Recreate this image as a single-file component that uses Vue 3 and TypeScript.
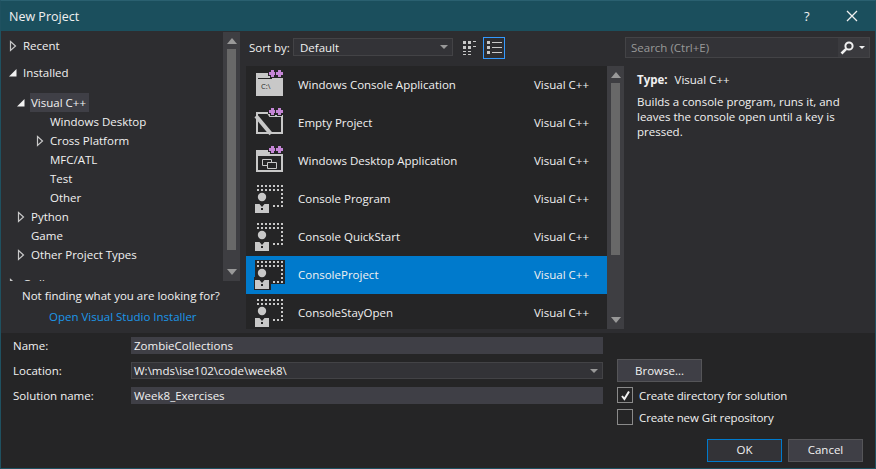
<template>
  <div class="dialog">
    <header class="titlebar">
      <span class="title">New Project</span>
      <span class="help">?</span>
      <svg class="close" width="14" height="14" viewBox="0 0 14 14">
        <path d="M2 2L12 12M12 2L2 12" stroke="#f1f1f1" stroke-width="1.3" fill="none" />
      </svg>
    </header>

    <main class="top">
      <aside class="left">
        <div class="tree-wrap">
          <ul class="tree">
            <li
              v-for="node in tree"
              :key="node.label"
              class="node"
              :class="[`lvl-${node.level}`, { spaced: node.spaced }]"
            >
              <svg class="arrow" width="10" height="12" viewBox="0 0 10 12">
                <path v-if="node.arrow === 'closed'" d="M2.5 1.5L7.5 6L2.5 10.5Z" fill="none" stroke="#c8c8c8" stroke-width="1.2" />
                <path v-else-if="node.arrow === 'open'" d="M8.5 2V9.5H1Z" fill="#f1f1f1" />
              </svg>
              <span class="node-text" :class="{ current: node.current }">{{ node.label }}</span>
            </li>
          </ul>
          <div class="scrollbar">
            <svg width="10" height="6" viewBox="0 0 10 6"><path d="M5 0L10 6H0Z" fill="#999" /></svg>
            <div class="tree-thumb"></div>
            <svg width="10" height="6" viewBox="0 0 10 6"><path d="M5 6L10 0H0Z" fill="#999" /></svg>
          </div>
        </div>
        <p class="hint">Not finding what you are looking for?</p>
        <a class="link">Open Visual Studio Installer</a>
      </aside>

      <section class="middle">
        <div class="sort-row">
          <label class="sort-label">Sort by:</label>
          <div class="sort-select">
            <span>Default</span>
            <i class="caret"></i>
          </div>
          <button class="view-btn">
            <svg width="14" height="14" viewBox="0 0 14 14" fill="#c8c8c8">
              <rect x="0" y="0" width="3" height="3" /><rect x="5" y="0" width="3" height="3" /><rect x="10" y="0" width="3" height="1" />
              <rect x="0" y="5" width="3" height="3" /><rect x="5" y="5" width="3" height="3" /><rect x="10" y="5" width="3" height="1" />
              <rect x="0" y="10" width="3" height="1" /><rect x="5" y="10" width="3" height="1" />
              <rect x="0" y="13" width="3" height="1" /><rect x="5" y="13" width="3" height="1" />
            </svg>
          </button>
          <button class="view-btn active">
            <svg width="15" height="14" viewBox="0 0 15 14" fill="#c8c8c8">
              <rect x="0" y="0" width="3" height="3" /><rect x="5" y="1" width="10" height="1" />
              <rect x="0" y="5" width="3" height="3" /><rect x="5" y="6" width="10" height="1" />
              <rect x="0" y="10" width="3" height="3" /><rect x="5" y="11" width="10" height="1" />
            </svg>
          </button>
        </div>

        <div class="list-wrap">
          <ul class="list">
            <li v-for="t in templates" :key="t.name" class="row" :class="{ selected: t.selected }">
              <svg class="tpl-icon" width="31" height="30" viewBox="0 0 31 30">
                <template v-if="t.icon === 'console'">
                  <path class="halo" d="M1 0H31V24H17V30H0V17H1Z" />
                  <rect v-for="d in consoleDots" :key="d.join()" :x="d[0]" :y="d[1]" width="2" height="2" fill="#c8c8c8" />
                  <circle cx="8" cy="13" r="4.2" fill="#c8c8c8" />
                  <path d="M1 20H5.5L8 23L10.5 20H15V29H1Z" fill="#c8c8c8" />
                  <rect x="7" y="24" width="2" height="2" class="tie" />
                </template>
                <template v-else>
                  <template v-if="t.icon === 'app'">
                    <path d="M2 3H16L18 8H29V26H2Z" fill="#c8c8c8" />
                    <path d="M4 8H18V9H4Z" fill="#252526" />
                    <text x="7" y="19" class="cmd">C:\</text>
                  </template>
                  <template v-if="t.icon === 'empty'">
                    <path d="M3 5H14L16 8H28V25H3Z" fill="none" stroke="#c8c8c8" stroke-width="2" />
                    <path d="M2 8L17 26" stroke="#c8c8c8" stroke-width="4" fill="none" />
                  </template>
                  <template v-if="t.icon === 'desktop'">
                    <path d="M3 5H15L17 9H28V25H3Z" fill="none" stroke="#c8c8c8" stroke-width="2" />
                    <path d="M2 4H15V9H2Z" fill="#c8c8c8" />
                    <path d="M2 8H29V10H2Z" fill="#c8c8c8" />
                    <path d="M8.5 13.5H17.5V19.5H8.5Z" fill="none" stroke="#c8c8c8" />
                    <path d="M13.5 16.5H22.5V22.5H13.5Z" fill="#252526" stroke="#c8c8c8" />
                  </template>
                  <path class="plus" d="M18 0H21V2H23V5H21V7H18V5H16V2H18Z" transform="translate(-1 0)" />
                  <path class="plus" d="M18 0H21V2H23V5H21V7H18V5H16V2H18Z" transform="translate(6 0)" />
                </template>
              </svg>
              <span class="tpl-name">{{ t.name }}</span>
              <span class="tpl-lang">Visual C++</span>
            </li>
          </ul>
          <div class="scrollbar">
            <svg width="10" height="6" viewBox="0 0 10 6"><path d="M5 0L10 6H0Z" fill="#999" /></svg>
            <div class="list-thumb"></div>
            <svg width="10" height="6" viewBox="0 0 10 6"><path d="M5 6L10 0H0Z" fill="#999" /></svg>
          </div>
        </div>
      </section>

      <aside class="right">
        <div class="search">
          <span class="search-text">Search (Ctrl+E)</span>
          <span class="search-btn">
            <svg class="lens" width="14" height="14" viewBox="0 0 14 14">
              <circle cx="9" cy="5" r="3.6" fill="none" stroke="#f1f1f1" stroke-width="2" />
              <path d="M6.2 7.8L1.5 12.5" stroke="#f1f1f1" stroke-width="2.6" />
            </svg>
            <i class="caret light"></i>
          </span>
        </div>
        <p class="type"><b>Type:</b><span>Visual C++</span></p>
        <p class="desc">Builds a console program, runs it, and leaves the console open until a key is pressed.</p>
      </aside>
    </main>

    <footer class="bottom">
      <div class="fields">
        <label>Name:</label>
        <div class="field">ZombieCollections</div>
        <label>Location:</label>
        <div class="field combo">W:\mds\ise102\code\week8\<i class="caret"></i></div>
        <label>Solution name:</label>
        <div class="field">Week8_Exercises</div>
      </div>
      <div class="options">
        <button class="btn browse">Browse...</button>
        <div class="check">
          <span class="box">
            <svg width="13" height="13" viewBox="0 0 13 13"><path d="M3 7L5.4 10L10 2.5" fill="none" stroke="#f1f1f1" stroke-width="2" /></svg>
          </span>
          Create directory for solution
        </div>
        <div class="check"><span class="box"></span>Create new Git repository</div>
      </div>
      <div class="actions">
        <button class="btn primary">OK</button>
        <button class="btn">Cancel</button>
      </div>
    </footer>
  </div>
</template>

<script setup lang="ts">
interface TreeNode {
  label: string
  level: number
  arrow?: 'closed' | 'open'
  spaced?: boolean
  current?: boolean
}

interface ProjectTemplate {
  name: string
  icon: 'app' | 'empty' | 'desktop' | 'console'
  selected?: boolean
}

const tree: TreeNode[] = [
  { label: 'Recent', level: 0, arrow: 'closed' },
  { label: 'Installed', level: 0, arrow: 'open', spaced: true },
  { label: 'Visual C++', level: 1, arrow: 'open', spaced: true, current: true },
  { label: 'Windows Desktop', level: 2 },
  { label: 'Cross Platform', level: 2, arrow: 'closed' },
  { label: 'MFC/ATL', level: 2 },
  { label: 'Test', level: 2 },
  { label: 'Other', level: 2 },
  { label: 'Python', level: 1, arrow: 'closed' },
  { label: 'Game', level: 1 },
  { label: 'Other Project Types', level: 1, arrow: 'closed' },
  { label: 'Online', level: 0, arrow: 'closed', spaced: true },
]

const templates: ProjectTemplate[] = [
  { name: 'Windows Console Application', icon: 'app' },
  { name: 'Empty Project', icon: 'empty' },
  { name: 'Windows Desktop Application', icon: 'desktop' },
  { name: 'Console Program', icon: 'console' },
  { name: 'Console QuickStart', icon: 'console' },
  { name: 'ConsoleProject', icon: 'console', selected: true },
  { name: 'ConsoleStayOpen', icon: 'console' },
]

// dotted window frame of the console template icon
const consoleDots: number[][] = [
  ...[3, 7, 11, 15, 19, 23, 27].map((x) => [x, 1]),
  ...[3, 7, 11, 15, 19, 23, 27].map((x) => [x, 5]),
  [27, 9], [27, 13], [27, 17],
  [19, 21], [23, 21], [27, 21],
]
</script>

<style>
html, body { margin: 0; background: #252526; }
</style>

<style scoped>
* { box-sizing: border-box; }

.dialog {
  width: 876px;
  height: 469px;
  display: flex;
  flex-direction: column;
  border: 1px solid #1f5160;
  border-top-color: #2a6070;
  background: #252526;
  color: #f1f1f1;
  font-family: "Open Sans", "Noto Sans", sans-serif;
  font-size: 11.5px;
  overflow: hidden;
}

.titlebar {
  height: 30px;
  flex: none;
  display: flex;
  align-items: center;
  background: #1b4f5d;
  padding: 0 16px 0 8px;
}
.title { font-size: 12.5px; flex: 1; }
.help { width: 14px; margin-right: 27px; font-size: 13px; }

.top {
  height: 302px;
  flex: none;
  display: flex;
  background: #2d2d30;
}

.left {
  width: 245px;
  flex: none;
  display: flex;
  flex-direction: column;
}
.tree-wrap {
  height: 250px;
  flex: none;
  display: flex;
  padding-top: 1px;
}
.tree {
  flex: 1;
  margin: 0;
  padding: 4px 0 0;
  list-style: none;
  overflow: hidden;
}
.node {
  height: 19px;
  display: flex;
  align-items: center;
}
.node.spaced { margin-top: 8px; }
.node.spaced.lvl-1 { margin-top: 11px; }
.node.spaced:last-child { margin-top: 10px; }
.lvl-0 { padding-left: 7px; }
.lvl-1 { padding-left: 15px; }
.lvl-2 { padding-left: 34px; }
.arrow { flex: none; margin-right: 5px; }
.node-text { padding: 0 3px 0 0; white-space: nowrap; }
.node-text.current {
  background: #3f3f46;
  height: 19px;
  line-height: 19px;
  padding: 0 3px 0 1px;
  margin-left: -1px;
}

.scrollbar {
  width: 17px;
  flex: none;
  background: #3e3e42;
  display: flex;
  flex-direction: column;
  align-items: center;
  padding: 6px 0;
}
.tree-wrap .scrollbar { margin-right: 6px; }
.tree-thumb {
  width: 9px;
  height: 201px;
  margin: 5px 0 auto;
  background: #686868;
}
.list-thumb {
  width: 9px;
  height: 172px;
  margin: 5px 0 auto;
  background: #686868;
}

.hint { margin: 7px 0 0 21px; line-height: 16px; white-space: nowrap; }
.link { margin: 5px 0 0 48px; color: #1c97ea; line-height: 16px; white-space: nowrap; }

.middle {
  width: 378px;
  flex: none;
  display: flex;
  flex-direction: column;
}
.sort-row {
  height: 35px;
  flex: none;
  display: flex;
  align-items: center;
  padding: 0 0 3px 3px;
}
.sort-label { width: 44px; }
.sort-select {
  width: 160px;
  height: 18px;
  padding: 0 4px 0 6px;
  border: 1px solid #434346;
  background: #333337;
  display: flex;
  align-items: center;
  justify-content: space-between;
  margin-right: 6px;
}
.caret {
  width: 0;
  height: 0;
  border: 4px solid transparent;
  border-top-color: #999;
  border-bottom-width: 0;
  flex: none;
}
.view-btn {
  width: 22px;
  height: 22px;
  padding: 0;
  margin: 2px 2px 0 0;
  border: 1px solid transparent;
  background: none;
  display: flex;
  align-items: center;
  justify-content: center;
}
.view-btn.active { border-color: #3399ff; }

.list-wrap {
  height: 263px;
  flex: none;
  display: flex;
}
.list {
  flex: 1;
  margin: 0;
  padding: 0;
  list-style: none;
  background: #252526;
  overflow: hidden;
}
.row {
  height: 38px;
  flex: none;
  display: flex;
  align-items: center;
  padding-left: 8px;
}
.row.selected { background: #007acc; }
.tpl-icon { flex: none; margin-right: 13px; }
.tpl-name { width: 236px; padding-bottom: 2px; white-space: nowrap; }
.tpl-lang { padding-bottom: 2px; white-space: nowrap; }
.halo { fill: transparent; }
.selected .halo { fill: #252526; }
.tie { fill: #252526; }
.cmd { font-size: 7.5px; fill: #2a2a2c; }
.plus { fill: #c586d6; stroke: #252526; stroke-width: 2; paint-order: stroke; }

.right {
  flex: 1;
  min-width: 0;
  padding: 6px 5px 0 1px;
}
.search {
  height: 21px;
  display: flex;
  align-items: center;
  border: 1px solid #434346;
  background: #333337;
  padding-left: 5px;
}
.search-text { flex: 1; color: #999; }
.search-btn {
  height: 19px;
  display: flex;
  align-items: center;
  padding: 0 2px 0 2px;
  background: #3a3a3e;
}
.lens { margin-right: 5px; }
.caret.light { border-top-color: #f1f1f1; border-width: 3.5px; border-bottom-width: 0; margin-right: 2px; }
.type {
  margin: 14px 0 0 12px;
  line-height: 16px;
}
.type b { margin-right: 7px; }
.desc {
  margin: 6px 8px 0 12px;
  line-height: 15px;
}

.bottom {
  flex: 1;
  display: grid;
  grid-template-columns: 603px 1fr;
  grid-template-rows: 102px 1fr;
  padding-top: 4px;
}
.fields {
  display: grid;
  grid-template-columns: 118px 472px;
  grid-auto-rows: 17px;
  row-gap: 8px;
  padding-left: 12px;
  align-items: center;
}
.field {
  height: 17px;
  line-height: 17px;
  padding-left: 3px;
  background: #3f3f46;
  white-space: nowrap;
}
.field.combo {
  background: #333337;
  border: 1px solid #434346;
  padding-left: 2px;
  line-height: 14px;
  display: flex;
  align-items: center;
  justify-content: space-between;
  padding-right: 4px;
}
.options {
  padding: 22px 0 0 13px;
  letter-spacing: -0.1px;
}
.btn {
  height: 23px;
  width: 75px;
  padding: 0;
  border: 1px solid #555558;
  background: #3f3f46;
  color: #f1f1f1;
  font: inherit;
}
.browse { width: 85px; display: block; margin-bottom: 5px; }
.check {
  height: 16px;
  margin-bottom: 6px;
  display: flex;
  align-items: center;
  white-space: nowrap;
}
.box {
  width: 16px;
  height: 16px;
  border: 1px solid #8a8a8a;
  margin-right: 6px;
  display: flex;
  align-items: center;
  justify-content: center;
}
.actions {
  grid-column: 1 / 3;
  display: flex;
  justify-content: flex-end;
  gap: 6px;
  padding-right: 12px;
}
.actions .btn { padding-bottom: 2px; }
.btn.primary { border-color: #007acc; background: #333337; }
</style>
